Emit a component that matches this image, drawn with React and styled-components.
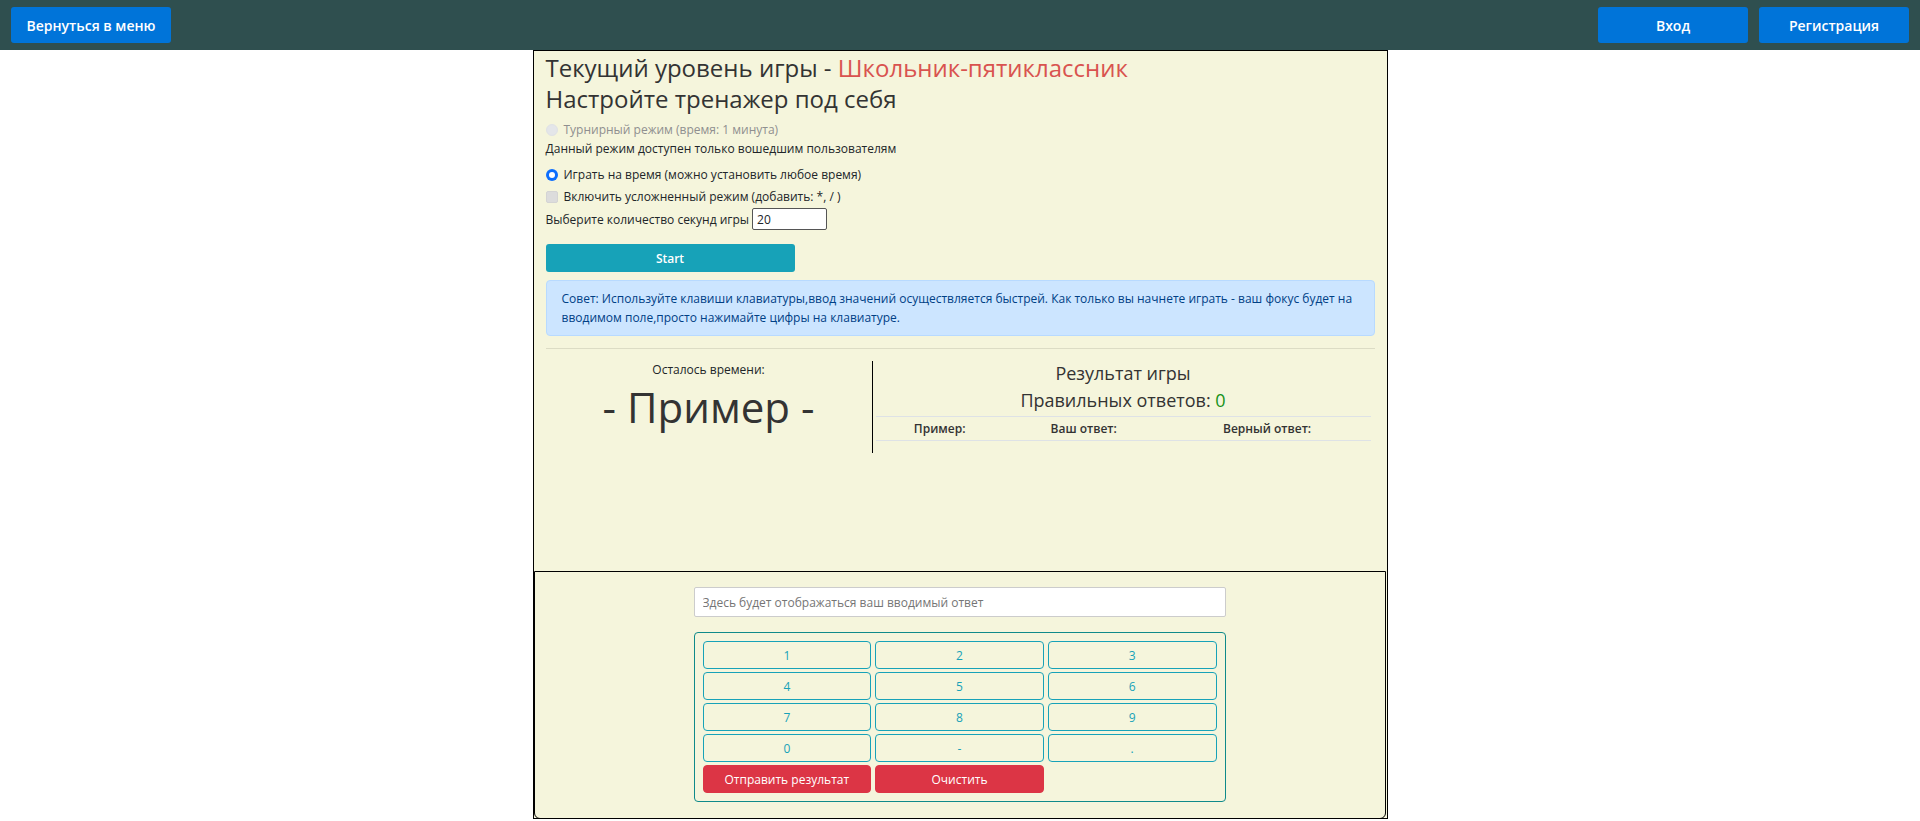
import styled, { createGlobalStyle } from "styled-components";

const GlobalStyle = createGlobalStyle`
  * {
    box-sizing: border-box;
  }

  body {
    margin: 0;
    background-color: #ffffff;
    font-family: "Open Sans", "Noto Sans", sans-serif;
    color: #212529;
  }
`;

const Header = styled.header`
  height: 50px;
  padding: 0 11px;
  display: flex;
  align-items: center;
  justify-content: space-between;
  background-color: #2f4f4f;
`;

const NavGroup = styled.div`
  display: flex;
  gap: 11px;
`;

const NavButton = styled.button`
  width: ${({ $width }) => $width}px;
  height: 36px;
  border: none;
  border-radius: 3px;
  background-color: #0074d9;
  color: #ffffff;
  font-family: inherit;
  font-size: 14px;
  font-weight: 600;
  cursor: pointer;
`;

const Board = styled.main`
  width: 855px;
  height: calc(100vh - 52px);
  margin: 0 auto;
  border: 1px solid #000000;
  background-color: #f5f5dc;
  display: flex;
  flex-direction: column;
`;

const Settings = styled.section`
  flex: 1;
  padding: 1px 12px 0;
`;

const Title = styled.h2`
  margin: 0;
  font-size: 24px;
  font-weight: 400;
  line-height: 31px;
  color: #333333;

  span {
    color: #d9534f;
  }
`;

const Option = styled.label`
  margin-top: ${({ $gap }) => $gap}px;
  display: flex;
  align-items: center;
  font-size: 12px;
  line-height: 18px;
  color: ${({ $muted }) => ($muted ? "#8f8f8f" : "#212529")};
`;

const Radio = styled.span`
  width: 12px;
  height: 12px;
  margin-right: 6px;
  border-radius: 50%;
  flex-shrink: 0;
  background-color: ${({ $checked }) => ($checked ? "#0d6efd" : "#e4e6e9")};
  border: ${({ $checked }) => ($checked ? "none" : "1px solid #e0e2e5")};
  position: relative;

  &::after {
    content: "";
    display: ${({ $checked }) => ($checked ? "block" : "none")};
    position: absolute;
    top: 3px;
    left: 3px;
    width: 6px;
    height: 6px;
    border-radius: 50%;
    background-color: #ffffff;
  }
`;

const Checkbox = styled.span`
  width: 12px;
  height: 12px;
  margin-right: 6px;
  border-radius: 2px;
  flex-shrink: 0;
  background-color: #dcdcdc;
  border: 1px solid #d4d4d4;
`;

const Note = styled.p`
  margin: ${({ $gap }) => $gap}px 0 0;
  font-size: 12px;
  line-height: 18px;
  color: #212529;
`;

const SecondsRow = styled.div`
  margin-top: 2px;
  height: 22px;
  display: flex;
  align-items: center;
  gap: 3px;
  font-size: 12px;

  input {
    width: 75px;
    height: 22px;
    padding: 0 4px;
    border: 1px solid #555555;
    border-radius: 2px;
    background-color: #ffffff;
    font-family: inherit;
    font-size: 12px;
    color: #212529;
  }
`;

const StartButton = styled.button`
  display: block;
  width: 249px;
  height: 28px;
  margin-top: 14px;
  border: none;
  border-radius: 3px;
  background-color: #17a2b8;
  color: #ffffff;
  font-family: inherit;
  font-size: 12px;
  font-weight: 600;
`;

const Tip = styled.div`
  margin-top: 8px;
  padding: 8px 15px;
  border: 1px solid #b8daff;
  border-radius: 4px;
  background-color: #cce5ff;
  color: #004085;
  font-size: 12px;
  line-height: 19px;
`;

const Divider = styled.hr`
  margin: 12px 0 0;
  border: none;
  border-top: 1px solid rgba(0, 0, 0, 0.1);
`;

const Results = styled.div`
  margin-top: 12px;
  display: flex;
  align-items: flex-start;
`;

const TimerCol = styled.div`
  width: 327px;
  padding-bottom: 19px;
  border-right: 1px solid #000000;
  text-align: center;
`;

const TimerLabel = styled.div`
  font-size: 12px;
  line-height: 18px;
  color: #212529;
`;

const Example = styled.div`
  font-size: 42px;
  line-height: 55px;
  color: #333333;
`;

const ResultCol = styled.div`
  flex: 1;
  padding: 0 4px 0 3px;
  text-align: center;
  color: #333333;
`;

const ResultLine = styled.div`
  margin-top: ${({ $gap }) => $gap}px;
  font-size: 18px;
  line-height: 24px;

  span {
    color: #17921a;
  }
`;

const ResultTable = styled.table`
  width: 100%;
  margin-top: 4px;
  border-collapse: collapse;

  th {
    padding: 4px;
    border-top: 1px solid #dee2e6;
    border-bottom: 1px solid #dee2e6;
    font-size: 12px;
    font-weight: 600;
    line-height: 15px;
    color: #333333;
    text-align: center;
  }
`;

const Pad = styled.section`
  height: 248px;
  padding-top: 15px;
  margin: 0 1px -1px 0;
  border: 1px solid #000000;
  border-radius: 0 0 6px 6px;
  display: flex;
  flex-direction: column;
  align-items: center;
`;

const AnswerInput = styled.input`
  width: 532px;
  height: 30px;
  padding: 0 8px;
  border: 1px solid #cccccc;
  border-radius: 2px;
  background-color: #ffffff;
  font-family: inherit;
  font-size: 12px;

  &::placeholder {
    color: #757575;
  }
`;

const Keypad = styled.div`
  width: 532px;
  margin-top: 15px;
  padding: 8px;
  border: 1px solid #0f8a8a;
  border-radius: 4px;
  display: grid;
  grid-template-columns: repeat(3, 1fr);
  grid-auto-rows: 28px;
  gap: 3px 4px;
`;

const Key = styled.button`
  border: 1px solid ${({ $danger }) => ($danger ? "#dc3545" : "#17a2b8")};
  border-radius: 4px;
  background-color: ${({ $danger }) => ($danger ? "#dc3545" : "transparent")};
  color: ${({ $danger }) => ($danger ? "#ffffff" : "#17a2b8")};
  font-family: inherit;
  font-size: 12px;
  cursor: pointer;
`;

const keys = ["1", "2", "3", "4", "5", "6", "7", "8", "9", "0", "-", "."];

export default function App() {
  return (
    <>
      <GlobalStyle />
      <Header>
        <NavButton $width={160}>Вернуться в меню</NavButton>
        <NavGroup>
          <NavButton $width={150}>Вход</NavButton>
          <NavButton $width={150}>Регистрация</NavButton>
        </NavGroup>
      </Header>

      <Board>
        <Settings>
          <Title>
            Текущий уровень игры - <span>Школьник-пятиклассник</span>
          </Title>
          <Title>Настройте тренажер под себя</Title>

          <Option $gap={7} $muted>
            <Radio />
            Турнирный режим (время: 1 минута)
          </Option>
          <Note $gap={1}>Данный режим доступен только вошедшим пользователям</Note>

          <Option $gap={8}>
            <Radio $checked />
            Играть на время (можно установить любое время)
          </Option>
          <Option $gap={4}>
            <Checkbox />
            Включить усложненный режим (добавить: *, / )
          </Option>

          <SecondsRow>
            Выберите количество секунд игры
            <input type="text" defaultValue="20" />
          </SecondsRow>

          <StartButton>Start</StartButton>

          <Tip>
            Совет: Используйте клавиши клавиатуры,ввод значений осуществляется
            быстрей. Как только вы начнете играть - ваш фокус будет на вводимом
            поле,просто нажимайте цифры на клавиатуре.
          </Tip>

          <Divider />

          <Results>
            <TimerCol>
              <TimerLabel>Осталось времени:</TimerLabel>
              <Example>- Пример -</Example>
            </TimerCol>
            <ResultCol>
              <ResultLine $gap={0}>Результат игры</ResultLine>
              <ResultLine $gap={3}>
                Правильных ответов: <span>0</span>
              </ResultLine>
              <ResultTable>
                <thead>
                  <tr>
                    <th>Пример:</th>
                    <th>Ваш ответ:</th>
                    <th>Верный ответ:</th>
                  </tr>
                </thead>
              </ResultTable>
            </ResultCol>
          </Results>
        </Settings>

        <Pad>
          <AnswerInput placeholder="Здесь будет отображаться ваш вводимый ответ" readOnly />
          <Keypad>
            {keys.map((k) => (
              <Key key={k}>{k}</Key>
            ))}
            <Key $danger>Отправить результат</Key>
            <Key $danger>Очистить</Key>
          </Keypad>
        </Pad>
      </Board>
    </>
  );
}
